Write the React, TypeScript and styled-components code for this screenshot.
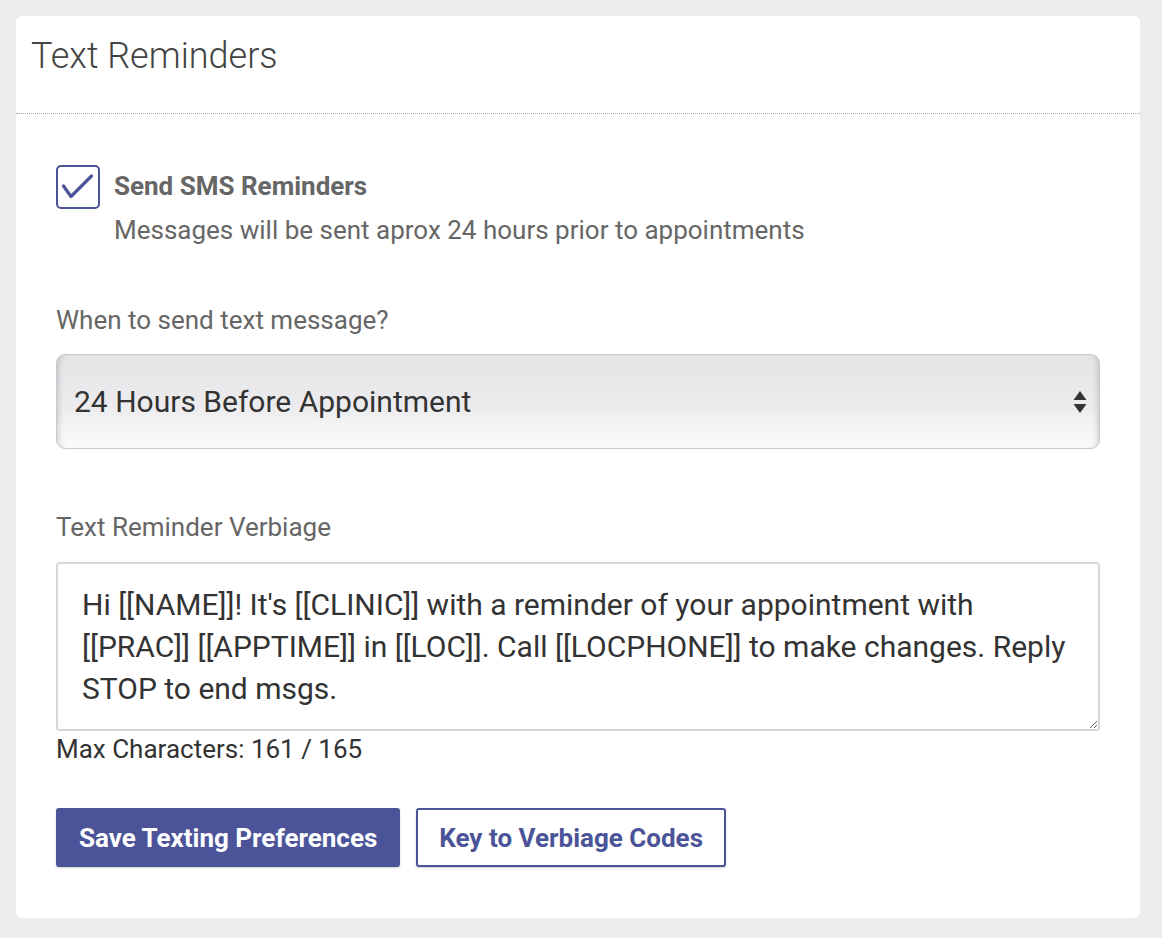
import React from 'react';
import styled, { createGlobalStyle } from 'styled-components';

const GlobalStyle = createGlobalStyle`
    * { box-sizing: border-box; }
    body {
        margin: 0;
        background: #ececec;
        font-family: Roboto, 'Liberation Sans', sans-serif;
    }
`;

const brand = '#4b5499';

const Page = styled.div`
    padding: 16px 22px 20px 16px;
`;

const Card = styled.section`
    background: #fff;
    border-radius: 6px;
    width: 1124px;
`;

const Header = styled.header`
    height: 98px;
    padding: 19px 15px 0;
    border-bottom: 1px dotted #a8a8a8;
`;

const Title = styled.h2`
    margin: 0;
    font-size: 36px;
    line-height: 42px;
    font-weight: 300;
    color: #444;
`;

const Body = styled.div`
    padding: 51px 40px 51px;
    display: flex;
    flex-direction: column;
`;

const CheckRow = styled.label`
    display: grid;
    grid-template-columns: 44px 1fr;
    column-gap: 14px;
    align-items: start;
`;

const CheckBox = styled.span`
    width: 44px;
    height: 44px;
    border: 2px solid ${brand};
    border-radius: 5px;
    display: flex;
    align-items: center;
    justify-content: center;
`;

const CheckText = styled.div`
    padding-top: 5px;
    color: #666;
`;

const CheckTitle = styled.div`
    font-size: 26px;
    font-weight: 700;
    line-height: 32px;
`;

const Hint = styled.div`
    margin-top: 12px;
    font-size: 26px;
    line-height: 32px;
`;

const FieldLabel = styled.div<{ mt: number }>`
    margin-top: ${(p) => p.mt}px;
    font-size: 26px;
    line-height: 30px;
    color: #666;
`;

const SelectWrap = styled.div`
    position: relative;
    margin-top: 19px;
`;

const Select = styled.select`
    appearance: none;
    width: 100%;
    height: 95px;
    padding: 0 50px 0 17px;
    border: 1px solid #c9c9cf;
    border-radius: 9px;
    background: linear-gradient(#e4e4e6, #ececee 55%, #fbfbfb);
    box-shadow: inset 6px 0 6px -5px rgba(0, 0, 0, 0.18), inset -6px 0 6px -5px rgba(0, 0, 0, 0.18);
    font-family: Roboto, 'Liberation Sans', sans-serif;
    font-size: 30px;
    color: #333;
    outline: none;
`;

const Arrows = styled.span`
    position: absolute;
    right: 12px;
    top: 50%;
    transform: translateY(-50%);
    display: flex;
    pointer-events: none;
`;

const TextArea = styled.textarea`
    margin-top: 20px;
    width: 100%;
    height: 169px;
    padding: 20px 22px 20px 24px;
    border: 2px solid #d6d6dc;
    border-radius: 4px;
    font-family: Roboto, 'Liberation Sans', sans-serif;
    font-size: 30px;
    line-height: 42px;
    color: #333;
    outline: none;
    resize: vertical;
`;

const Counter = styled.div`
    margin-top: 5px;
    font-size: 26px;
    line-height: 26px;
    color: #333;
`;

const Actions = styled.div`
    margin-top: 46px;
    display: flex;
    gap: 16px;
`;

const Button = styled.button<{ outline?: boolean }>`
    height: 59px;
    padding: 0 21px;
    border: 2px solid ${brand};
    border-radius: 3px;
    background: ${(p) => (p.outline ? '#fff' : brand)};
    color: ${(p) => (p.outline ? brand : '#fff')};
    font-family: Roboto, 'Liberation Sans', sans-serif;
    font-size: 26px;
    font-weight: 700;
    box-shadow: 0 1px 2px rgba(0, 0, 0, 0.2);
    cursor: pointer;
`;

const message =
    "Hi [[NAME]]! It's [[CLINIC]] with a reminder of your appointment with [[PRAC]] [[APPTIME]] in [[LOC]]. Call [[LOCPHONE]] to make changes. Reply STOP to end msgs.";

export default function App() {
    return (
        <>
            <GlobalStyle />
            <Page>
                <Card>
                    <Header>
                        <Title>Text Reminders</Title>
                    </Header>
                    <Body>
                        <CheckRow>
                            <CheckBox>
                                <svg width="36" height="36" viewBox="0 0 36 36">
                                    <path d="M3.5 17 L11 27.5 L31.5 7" fill="none" stroke={brand} strokeWidth="3.2" strokeLinecap="round" strokeLinejoin="round" />
                                </svg>
                            </CheckBox>
                            <CheckText>
                                <CheckTitle>Send SMS Reminders</CheckTitle>
                                <Hint>Messages will be sent aprox 24 hours prior to appointments</Hint>
                            </CheckText>
                        </CheckRow>

                        <FieldLabel mt={59}>When to send text message?</FieldLabel>
                        <SelectWrap>
                            <Select defaultValue="24">
                                <option value="24">24 Hours Before Appointment</option>
                                <option value="48">48 Hours Before Appointment</option>
                            </Select>
                            <Arrows>
                                <svg width="16" height="26" viewBox="0 0 16 26">
                                    <path d="M8 2 L14.5 11 L1.5 11 Z" fill="#333" />
                                    <path d="M1.5 15 L14.5 15 L8 24 Z" fill="#333" />
                                </svg>
                            </Arrows>
                        </SelectWrap>

                        <FieldLabel mt={63}>Text Reminder Verbiage</FieldLabel>
                        <TextArea defaultValue={message} />
                        <Counter>Max Characters: 161 / 165</Counter>

                        <Actions>
                            <Button>Save Texting Preferences</Button>
                            <Button outline>Key to Verbiage Codes</Button>
                        </Actions>
                    </Body>
                </Card>
            </Page>
        </>
    );
}
